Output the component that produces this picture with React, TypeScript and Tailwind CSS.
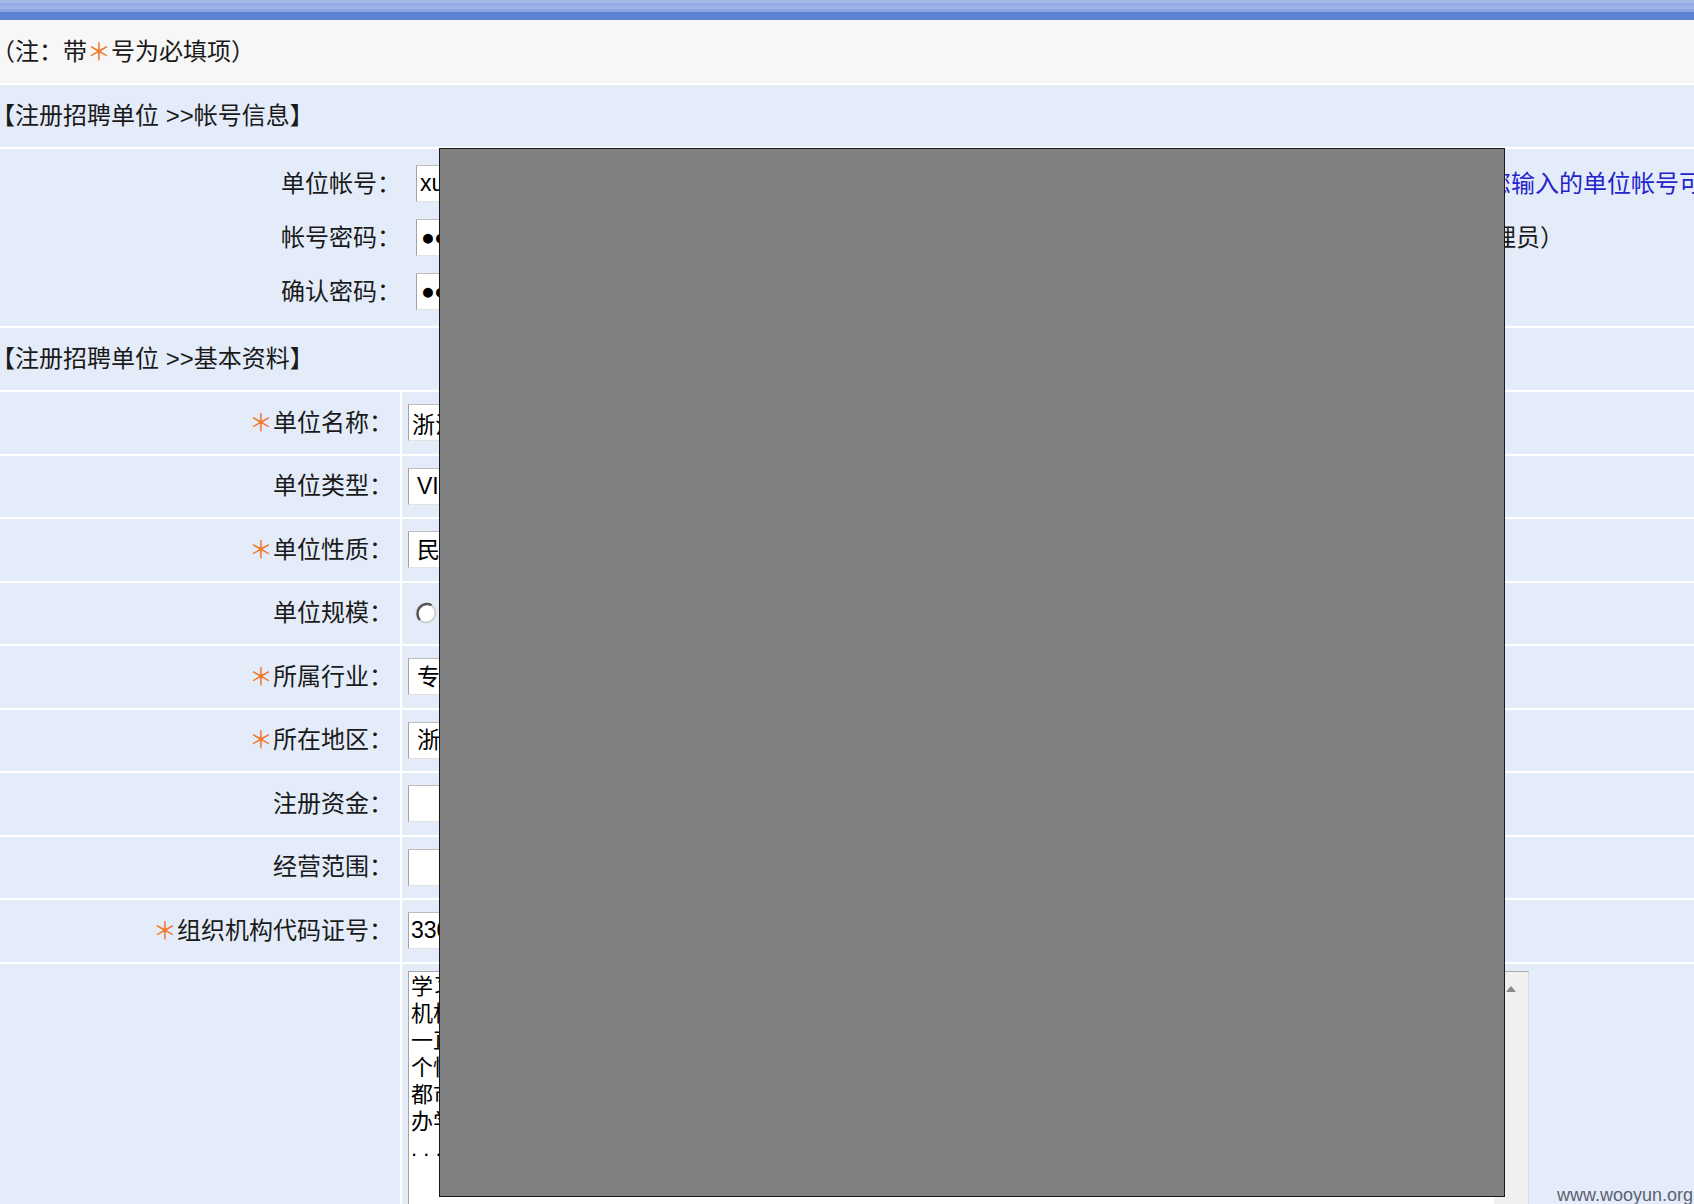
import React from "react";

function Star() {
  return <span className="text-[#f0782a]">＊</span>;
}

function TextInput({ value, className }: { value: string; className: string }) {
  return (
    <input
      readOnly
      value={value}
      className={`shrink-0 h-[37px] bg-white border border-t-[#bdbdbd] border-l-[#a3a3a3] border-r-[#e2e2e2] border-b-[#e2e2e2] text-[23px] text-black outline-none ${className}`}
    />
  );
}

function SelectBox({ value }: { value: string }) {
  return (
    <div className="shrink-0 h-[37px] w-[420px] bg-white border border-t-[#bdbdbd] border-l-[#a3a3a3] border-r-[#e2e2e2] border-b-[#e2e2e2] text-[23px] text-black flex items-center pl-[8px]">
      {value}
    </div>
  );
}

function Radio() {
  return (
    <svg width="22" height="22" viewBox="0 0 22 22" className="ml-[7px] shrink-0">
      <circle cx="11" cy="11" r="9.5" fill="#fff" stroke="#d0d0d0" strokeWidth="2" />
      <path d="M 5 18 A 9.5 9.5 0 0 1 16.5 3.2" fill="none" stroke="#555555" strokeWidth="2.4" />
    </svg>
  );
}

type Row = { label: string; star?: boolean; content: React.ReactNode };

const rows: Row[] = [
  { label: "单位名称：", star: true, content: <TextInput value="浙江某某教育科技有限公司" className="w-[520px] pl-[3px]" /> },
  { label: "单位类型：", content: <SelectBox value="VIP会员单位" /> },
  { label: "单位性质：", star: true, content: <SelectBox value="民营企业" /> },
  {
    label: "单位规模：",
    content: (
      <div className="flex items-center gap-[6px] text-[21px]">
        <Radio />
        <span>50人以下</span>
      </div>
    ),
  },
  { label: "所属行业：", star: true, content: <SelectBox value="专业服务/教育/培训" /> },
  { label: "所在地区：", star: true, content: <SelectBox value="浙江省杭州市" /> },
  { label: "注册资金：", content: <TextInput value="" className="w-[300px] pl-[3px]" /> },
  { label: "经营范围：", content: <TextInput value="" className="w-[700px] pl-[3px]" /> },
  { label: "组织机构代码证号：", star: true, content: <TextInput value="330106000000000" className="w-[360px] pl-[2px]" /> },
];

const desc = [
  "学习型组织，专业从事教育培训的民办教育机构，",
  "机构成立多年，拥有一支高素质、经验丰富的师资队伍，",
  "一直秉承诚信为本、质量第一的办学理念，",
  "个性化的辅导方案受到了广大学生和家长的一致好评，",
  "都市中心地段，交通便利，教学环境优美，",
  "办学规模不断扩大，现诚聘优秀人才加盟。",
  ". . .",
];

export default function App() {
  return (
    <div className="relative w-[1694px] h-[1204px] overflow-hidden bg-white text-[24px] text-[#1a1a1a] whitespace-nowrap font-['Liberation_Sans','Noto_Sans_CJK_SC',sans-serif]">
      {/* top bar */}
      <div className="h-[3px] bg-[#a6bae9]" />
      <div className="h-[3px] bg-[#93ace3]" />
      <div className="h-[3px] bg-[#a0b5e7]" />
      <div className="h-[3px] bg-[#8aa4df]" />
      <div className="h-[8px] bg-[#5a83d4]" />

      {/* note */}
      <div className="h-[63px] bg-[#f7f7f7] flex items-center">
        <span className="-ml-[9px]">
          （注：带<Star />号为必填项）
        </span>
      </div>

      <div className="flex flex-col gap-[2px] bg-white pt-[2px]">
        <div className="h-[62px] bg-[#e4ecf9] flex items-center">
          <span className="-ml-[9px]">【注册招聘单位 &gt;&gt;帐号信息】</span>
        </div>

        {/* account */}
        <div className="bg-[#e4ecf9] pt-[16px] pb-[16px] flex flex-col gap-[17px] overflow-hidden">
          <div className="flex items-center h-[37px]">
            <div className="shrink-0 w-[401px] text-right">单位帐号：</div>
            <TextInput value="xuexiaojiaoyu" className="ml-[15px] w-[900px] pl-[3px]" />
            <span className="shrink-0 ml-[75px] text-[#2424cc]">（提示：您输入的单位帐号可用于登录系统）</span>
          </div>
          <div className="flex items-center h-[37px]">
            <div className="shrink-0 w-[401px] text-right">帐号密码：</div>
            <TextInput value="●●●●●●●●" className="ml-[15px] w-[900px] pl-[4px] tracking-[-1px]" />
            <span className="shrink-0 ml-[8px]">（密码请告知管理员）</span>
          </div>
          <div className="flex items-center h-[37px]">
            <div className="shrink-0 w-[401px] text-right">确认密码：</div>
            <TextInput value="●●●●●●●●" className="ml-[15px] w-[900px] pl-[4px] tracking-[-1px]" />
          </div>
        </div>

        <div className="h-[62px] bg-[#e4ecf9] flex items-center">
          <span className="-ml-[9px]">【注册招聘单位 &gt;&gt;基本资料】</span>
        </div>

        {rows.map((r) => (
          <div key={r.label} className="flex gap-[2px] h-[61.5px]">
            <div className="shrink-0 w-[400px] bg-[#e4ecf9] flex items-center justify-end pr-[7px]">
              {r.star && <Star />}
              {r.label}
            </div>
            <div className="flex-1 bg-[#e4ecf9] flex items-center pl-[6px] overflow-hidden">{r.content}</div>
          </div>
        ))}

        {/* description */}
        <div className="flex gap-[2px] h-[320px]">
          <div className="shrink-0 w-[400px] bg-[#e4ecf9]" />
          <div className="flex-1 bg-[#e4ecf9] pt-[7px] pl-[6px]">
            <div className="w-[1121px] h-[300px] bg-white border border-t-[#a8a8a8] border-l-[#a3a3a3] border-r-[#dcdcdc] border-b-[#dcdcdc] flex">
              <div className="flex-1 pl-[2px] pt-[1px] text-[22px] leading-[27px] text-black overflow-hidden">
                {desc.map((l, i) => (
                  <div key={i}>{l}</div>
                ))}
              </div>
              <div className="w-[34px] bg-[#f0f0f0] flex justify-center pt-[14px]">
                <svg width="10" height="6" viewBox="0 0 10 6">
                  <path d="M0 6 L5 0 L10 6 Z" fill="#8a8a8a" />
                </svg>
              </div>
            </div>
          </div>
        </div>
      </div>

      {/* overlay */}
      <div className="absolute left-[439px] top-[148px] w-[1066px] h-[1049px] bg-[#808080] border border-[#1a1a1a]" />

      {/* watermark */}
      <div className="absolute right-[1px] top-[1184px] leading-[22px] text-[18px] text-[#5a6170] font-['Liberation_Sans',sans-serif]">
        www.wooyun.org
      </div>
    </div>
  );
}
